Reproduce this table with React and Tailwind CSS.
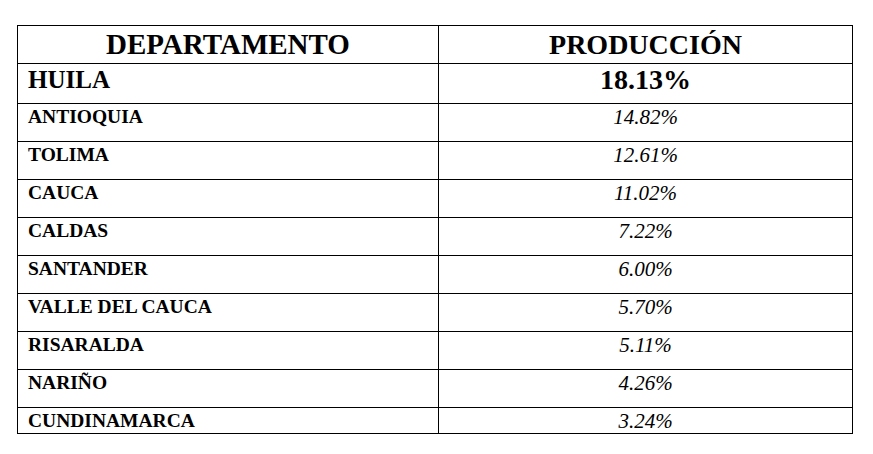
import React from 'react';

const rows = [
  ['ANTIOQUIA', '14.82%'],
  ['TOLIMA', '12.61%'],
  ['CAUCA', '11.02%'],
  ['CALDAS', '7.22%'],
  ['SANTANDER', '6.00%'],
  ['VALLE DEL CAUCA', '5.70%'],
  ['RISARALDA', '5.11%'],
  ['NARIÑO', '4.26%'],
  ['CUNDINAMARCA', '3.24%'],
];

const App = () => {
  return (
    <div className="w-[873px] h-[454px] bg-white overflow-hidden font-['Liberation_Serif',serif] text-black">
      <div className="ml-[17px] mt-[25px] w-[836px] border-t border-l border-r border-black">
        {/* Header */}
        <div className="flex h-[38px] border-b border-black">
          <div className="w-[421px] border-r border-black pt-[4px] text-center text-[29px] leading-[29px] font-bold">
            DEPARTAMENTO
          </div>
          <div className="flex-1 pt-[4px] text-center text-[28px] leading-[29px] font-bold">
            PRODUCCIÓN
          </div>
        </div>

        {/* Top row */}
        <div className="flex h-[40px] border-b border-black">
          <div className="w-[421px] border-r border-black pl-[10px] pt-[3px] text-[25px] leading-[25px] font-bold">
            HUILA
          </div>
          <div className="flex-1 pt-[3px] text-center text-[28px] leading-[26px] font-bold">
            18.13%
          </div>
        </div>

        {rows.map(([name, value], i) => (
          <div
            key={name}
            className={i === rows.length - 1 ? 'flex h-[26px] border-b border-black' : 'flex h-[38px] border-b border-black'}
          >
            <div className="w-[421px] border-r border-black pl-[10px] pt-[3px] text-[19.5px] leading-[20px] font-bold">
              {name}
            </div>
            <div className="flex-1 pt-[3px] text-center text-[21px] leading-[20px] italic">
              {value}
            </div>
          </div>
        ))}
      </div>
    </div>
  );
};

export default App;
